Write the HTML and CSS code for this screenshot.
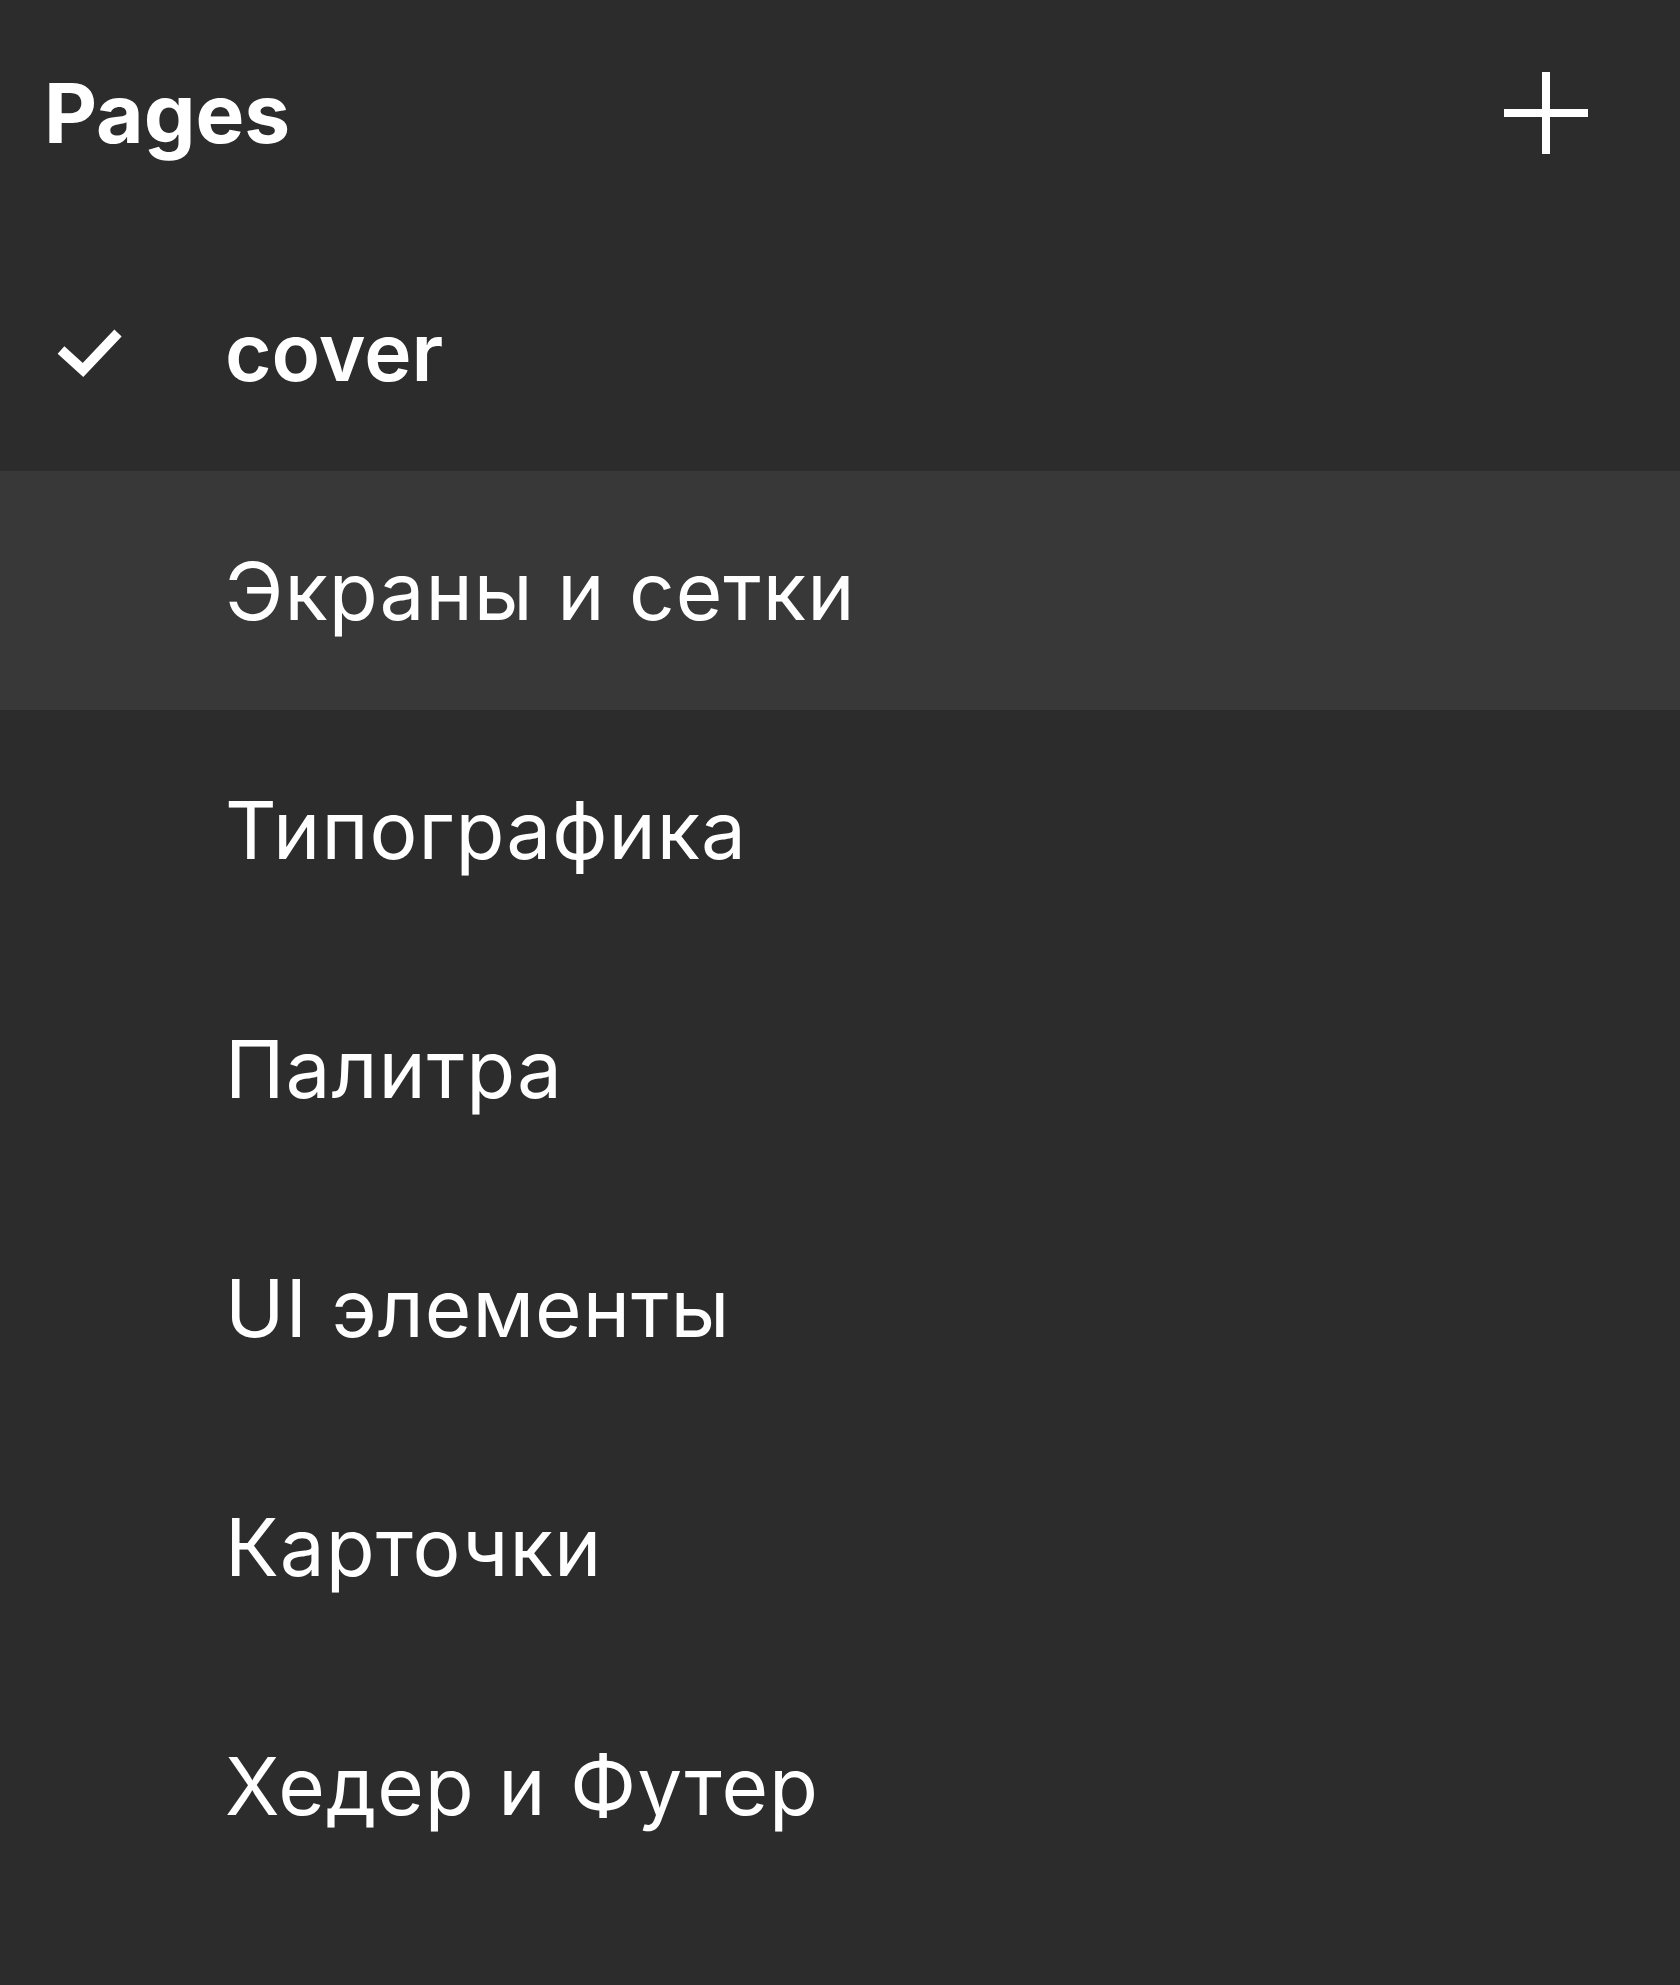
FILE: index.html
```html
<!DOCTYPE html>
<html lang="ru">
<head>
<meta charset="utf-8">
<title>Pages</title>
<link rel="stylesheet" href="styles.css">
</head>
<body>
<div class="panel">
  <header class="panel-header">
    <h1 class="title">Pages</h1>
    <button class="add-btn" aria-label="Add page">
      <svg width="90" height="90" viewBox="0 0 90 90"><path d="M3 45H87M45 4V86" stroke="#fff" stroke-width="8" fill="none"/></svg>
    </button>
  </header>
  <ul class="pages">
    <li class="page selected">
      <span class="check"><svg width="70" height="60" viewBox="0 0 70 60"><path d="M6 28L28 48L63 11" stroke="#fff" stroke-width="10" fill="none" stroke-linejoin="miter"/></svg></span>
      <span class="name">cover</span>
    </li>
    <li class="page hover"><span class="check"></span><span class="name">Экраны и сетки</span></li>
    <li class="page"><span class="check"></span><span class="name">Типографика</span></li>
    <li class="page"><span class="check"></span><span class="name">Палитра</span></li>
    <li class="page"><span class="check"></span><span class="name">UI элементы</span></li>
    <li class="page"><span class="check"></span><span class="name">Карточки</span></li>
    <li class="page"><span class="check"></span><span class="name">Хедер и Футер</span></li>
  </ul>
</div>
</body>
</html>
```

FILE: styles.css
```css
html, body {
  margin: 0;
  padding: 0;
  background: #2c2c2c;
}
body {
  width: 1680px;
  height: 1985px;
  overflow: hidden;
  font-family: Inter, "Noto Sans", sans-serif;
  color: #ffffff;
}
.panel {
  display: flex;
  flex-direction: column;
}
.panel-header {
  height: 232px;
  display: flex;
  align-items: center;
  justify-content: space-between;
  padding: 0 89px 6px 44px;
  box-sizing: border-box;
}
.title {
  margin: 0;
  font-size: 82px;
  font-weight: 700;
  letter-spacing: 0;
}
.add-btn {
  width: 90px;
  height: 90px;
  padding: 0;
  border: 0;
  background: none;
  display: flex;
}
.pages {
  list-style: none;
  margin: 0;
  padding: 0;
}
.page {
  height: 239px;
  display: flex;
  align-items: center;
  font-size: 80px;
  font-weight: 400;
  letter-spacing: 1px;
}
.page.hover {
  background: #383838;
}
.page.selected .name {
  font-weight: 600;
  letter-spacing: 0;
}
.check {
  width: 225px;
  flex: none;
  display: flex;
  padding-left: 55px;
  box-sizing: border-box;
}
.name {
  white-space: nowrap;
}
```
